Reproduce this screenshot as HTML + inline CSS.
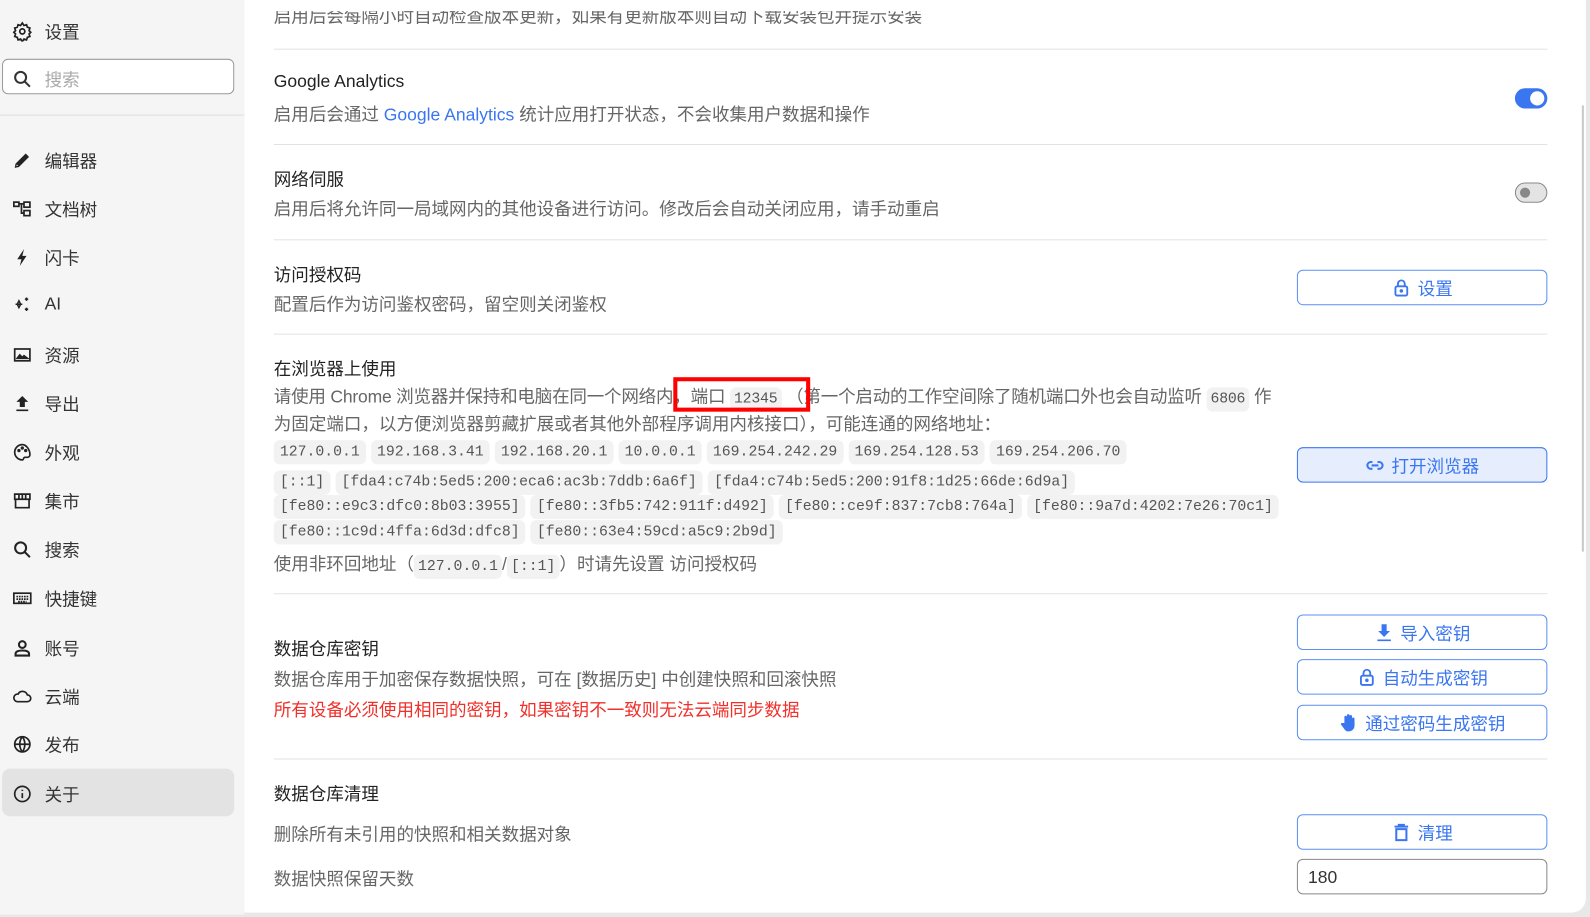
<!DOCTYPE html>
<html><head><meta charset="utf-8">
<style>
*{box-sizing:border-box;margin:0;padding:0}
body{width:1590px;height:917px;background:#e8e8e8;font-family:"Liberation Sans","Noto Sans CJK SC",sans-serif;position:relative;overflow:hidden}
#w{position:absolute;left:0;top:0;width:1568px;height:904px;transform:scale(1.014);transform-origin:0 0}
.side{position:absolute;left:0;top:0;width:241px;height:902px;background:#f5f5f5}
.main{position:absolute;left:241px;top:0;width:1323px;height:900px;background:#fff;border-radius:0 0 14px 0}
.a{position:absolute;white-space:nowrap}
.t{font-size:17.3px;color:#222}
.d{font-size:17.3px;color:#666}
.hr{position:absolute;left:270px;width:1256px;height:1px;background:#e2e2e2}
.nav{position:absolute;left:12px;font-size:17.3px;color:#333;display:flex;align-items:center}
.nav svg{width:20px;height:20px;margin-right:12px}
.c{font-family:"Liberation Mono",monospace;font-size:14.6px;color:#555;background:#f2f2f2;border-radius:6px;padding:2px 6px;display:inline-block;margin-right:5px;line-height:20px}
.i{padding:2px 4px;margin:0}
.btn{position:absolute;left:1279px;width:247px;height:35px;border:1px solid #5b8ff5;border-radius:6px;color:#3a76f0;font-size:17.3px;display:flex;align-items:center;justify-content:center;background:#fff}
.btn svg{width:20px;height:20px;margin-right:6px}
</style></head><body><div id="w">
<div class="side">
 <div class="nav" style="top:18px"><svg viewBox="0 0 24 24" fill="none" stroke="#222" stroke-width="2"><circle cx="12" cy="12" r="3"/><path d="M12 2l2 3 3-1 1 3 3 1-1 3 2 2-2 2 1 3-3 1-1 3-3-1-2 3-2-3-3 1-1-3-3-1 1-3-2-2 2-2-1-3 3-1 1-3 3 1z"/></svg>设置</div>
 <div class="a" style="left:2px;top:58px;width:229px;height:35px;border:1px solid #999;border-radius:6px;background:#fff"></div>
 <div class="nav" style="top:65px;color:#aaa"><svg viewBox="0 0 24 24" fill="none" stroke="#333" stroke-width="2.4"><circle cx="10" cy="10" r="6.5"/><path d="M15 15l6 6"/></svg>搜索</div>
 <div class="a" style="left:0;top:113px;width:241px;height:1px;background:#ddd"></div>
 <div class="nav" style="top:145px"><svg viewBox="0 0 24 24" fill="#222"><path d="M3 21l1-5L16 4l4 4L8 20zM5 19l2-.5L5.5 17z"/></svg>编辑器</div>
 <div class="nav" style="top:193px"><svg viewBox="0 0 24 24" fill="none" stroke="#222" stroke-width="2"><rect x="2" y="4" width="6" height="5"/><rect x="14" y="4" width="7" height="6"/><rect x="14" y="14" width="7" height="6"/><path d="M8 6h6M11 6v11h3"/></svg>文档树</div>
 <div class="nav" style="top:241px"><svg viewBox="0 0 24 24" fill="#222"><path d="M14 2L6 14h5l-2 8 8-12h-5z"/></svg>闪卡</div>
 <div class="nav" style="top:289px"><svg viewBox="0 0 24 24" fill="none" stroke="#222" stroke-width="1.8"><path d="M8 8l2 4-2 4-2-4zM4 12h8M17 4v4M15 6h4M17 16v4M15 18h4"/></svg>AI</div>
 <div class="nav" style="top:337px"><svg viewBox="0 0 24 24" fill="none" stroke="#222" stroke-width="2"><rect x="3" y="5" width="18" height="14"/><path d="M6 16l3-4 3 3 2-2 4 3z" fill="#222"/></svg>资源</div>
 <div class="nav" style="top:385px"><svg viewBox="0 0 24 24" fill="#222"><path d="M12 3l7 7h-4v6H9v-6H5zM5 19h14v2H5z"/></svg>导出</div>
 <div class="nav" style="top:433px"><svg viewBox="0 0 24 24" fill="none" stroke="#222" stroke-width="2"><path d="M12 3a9 9 0 100 18c2 0 1-3 3-3h3a3 3 0 003-3c0-6-4-12-9-12z"/><circle cx="8" cy="10" r="1"/><circle cx="12" cy="7" r="1"/><circle cx="16" cy="10" r="1"/></svg>外观</div>
 <div class="nav" style="top:481px"><svg viewBox="0 0 24 24" fill="none" stroke="#222" stroke-width="2"><path d="M3 4h18v6H3zM4 10v10h16V10M8 4v6M12 4v6M16 4v6"/></svg>集市</div>
 <div class="nav" style="top:529px"><svg viewBox="0 0 24 24" fill="none" stroke="#222" stroke-width="2.4"><circle cx="10" cy="10" r="6.5"/><path d="M15 15l6 6"/></svg>搜索</div>
 <div class="nav" style="top:577px"><svg viewBox="0 0 24 24" fill="none" stroke="#222" stroke-width="2"><rect x="2" y="6" width="20" height="12"/><path d="M5 10h14M5 13h14M7 16h10" stroke-dasharray="2 1"/></svg>快捷键</div>
 <div class="nav" style="top:626px"><svg viewBox="0 0 24 24" fill="none" stroke="#222" stroke-width="2.4"><circle cx="12" cy="8" r="4"/><path d="M4 21v-2c0-3 4-4 8-4s8 1 8 4v2z"/></svg>账号</div>
 <div class="nav" style="top:674px"><svg viewBox="0 0 24 24" fill="none" stroke="#222" stroke-width="2"><path d="M6 18h12a4 4 0 000-8 6 6 0 00-11-1 4.5 4.5 0 00-1 9z"/></svg>云端</div>
 <div class="nav" style="top:721px"><svg viewBox="0 0 24 24" fill="none" stroke="#222" stroke-width="2"><circle cx="12" cy="12" r="9"/><path d="M3 12h18M12 3c-4 5-4 13 0 18M12 3c4 5 4 13 0 18"/></svg>发布</div>
 <div class="a" style="left:2px;top:758px;width:229px;height:47px;background:#e3e3e3;border-radius:8px"></div>
 <div class="nav" style="top:770px"><svg viewBox="0 0 24 24" fill="none" stroke="#222" stroke-width="2"><circle cx="12" cy="12" r="9"/><path d="M12 11v6M12 7v1.5"/></svg>关于</div>
</div>
<div class="main"></div>
<div class="a" style="left:1560px;top:104px;width:2px;height:440px;background:#c8c8c8"></div>

<div class="a d" style="left:270px;top:2px;clip-path:inset(9px 0 0 0)">启用后会每隔小时自动检查版本更新，如果有更新版本则自动下载安装包并提示安装</div>
<div class="hr" style="top:48px"></div>
<div class="a t" style="left:270px;top:70px">Google Analytics</div>
<div class="a d" style="left:270px;top:99px">启用后会通过 <span style="color:#3a76f0">Google Analytics</span> 统计应用打开状态，不会收集用户数据和操作</div>
<div class="a" style="left:1494px;top:87px;width:32px;height:20px;border-radius:10px;background:#3a76f0"><div style="position:absolute;right:3px;top:3px;width:14px;height:14px;border-radius:50%;background:#fff"></div></div>
<div class="hr" style="top:142px"></div>
<div class="a t" style="left:270px;top:163px">网络伺服</div>
<div class="a d" style="left:270px;top:192px">启用后将允许同一局域网内的其他设备进行访问。修改后会自动关闭应用，请手动重启</div>
<div class="a" style="left:1494px;top:180px;width:32px;height:20px;border-radius:10px;background:#e4e4e4;border:1px solid #888"><div style="position:absolute;left:4px;top:4px;width:10px;height:10px;border-radius:50%;background:#888"></div></div>
<div class="hr" style="top:236px"></div>
<div class="a t" style="left:270px;top:257px">访问授权码</div>
<div class="a d" style="left:270px;top:286px">配置后作为访问鉴权密码，留空则关闭鉴权</div>
<div class="btn" style="top:266px"><svg viewBox="0 0 24 24" fill="none" stroke="#3a76f0" stroke-width="2.2"><rect x="5" y="10" width="14" height="11" rx="2"/><path d="M8 10V7a4 4 0 018 0v3"/><circle cx="12" cy="15.5" r="1" fill="#3a76f0"/></svg>设置</div>
<div class="hr" style="top:329px"></div>
<div class="a t" style="left:270px;top:350px">在浏览器上使用</div>
<div class="a d" style="left:270px;top:380px;line-height:23px;letter-spacing:-0.2px">请使用 Chrome 浏览器并保持和电脑在同一个网络内，端口 <span class="c i">12345</span> （第一个启动的工作空间除了随机端口外也会自动监听 <span class="c i">6806</span> 作</div>
<div class="a d" style="left:270px;top:404px">为固定端口，以方便浏览器剪藏扩展或者其他外部程序调用内核接口），可能连通的网络地址：</div>
<div class="a" style="left:664px;top:372px;width:135px;height:34px;border:4px solid #f00"></div>
<div class="a" style="left:270px;top:434px"><span class="c">127.0.0.1</span><span class="c">192.168.3.41</span><span class="c">192.168.20.1</span><span class="c">10.0.0.1</span><span class="c">169.254.242.29</span><span class="c">169.254.128.53</span><span class="c">169.254.206.70</span></div>
<div class="a" style="left:270px;top:464px"><span class="c">[::1]</span><span class="c">[fda4:c74b:5ed5:200:eca6:ac3b:7ddb:6a6f]</span><span class="c">[fda4:c74b:5ed5:200:91f8:1d25:66de:6d9a]</span></div>
<div class="a" style="left:270px;top:488px"><span class="c">[fe80::e9c3:dfc0:8b03:3955]</span><span class="c">[fe80::3fb5:742:911f:d492]</span><span class="c">[fe80::ce9f:837:7cb8:764a]</span><span class="c">[fe80::9a7d:4202:7e26:70c1]</span></div>
<div class="a" style="left:270px;top:513px"><span class="c">[fe80::1c9d:4ffa:6d3d:dfc8]</span><span class="c">[fe80::63e4:59cd:a5c9:2b9d]</span></div>
<div class="a d" style="left:270px;top:542px">使用非环回地址（<span class="c i">127.0.0.1</span>/<span class="c i">[::1]</span>）时请先设置 访问授权码</div>
<div class="btn" style="top:441px;background:#e6eefd;border-color:#3a76f0"><svg viewBox="0 0 24 24" fill="none" stroke="#3a76f0" stroke-width="2.4"><path d="M9 8H7a4 4 0 000 8h2M15 8h2a4 4 0 010 8h-2M8 12h8"/></svg>打开浏览器</div>
<div class="hr" style="top:585px"></div>
<div class="a t" style="left:270px;top:626px">数据仓库密钥</div>
<div class="a d" style="left:270px;top:656px">数据仓库用于加密保存数据快照，可在 [数据历史] 中创建快照和回滚快照</div>
<div class="a d" style="left:270px;top:686px;color:#f0302a">所有设备必须使用相同的密钥，如果密钥不一致则无法云端同步数据</div>
<div class="btn" style="top:606px"><svg viewBox="0 0 24 24" fill="#3a76f0"><path d="M9 2h6v8h4l-7 7-7-7h4zM4 20h16v2H4z"/></svg>导入密钥</div>
<div class="btn" style="top:650px"><svg viewBox="0 0 24 24" fill="none" stroke="#3a76f0" stroke-width="2.2"><rect x="5" y="10" width="14" height="11" rx="2"/><path d="M8 10V7a4 4 0 018 0v3"/><circle cx="12" cy="15.5" r="1" fill="#3a76f0"/></svg>自动生成密钥</div>
<div class="btn" style="top:695px"><svg viewBox="0 0 24 24" fill="#3a76f0"><path d="M7 12V5a1.5 1.5 0 013 0v6V3a1.5 1.5 0 013 0v8V4a1.5 1.5 0 013 0v8V7a1.5 1.5 0 013 0v8c0 4-3 7-7 7-3 0-4-1-6-4l-3-4a1.5 1.5 0 012-2z"/></svg>通过密码生成密钥</div>
<div class="hr" style="top:748px"></div>
<div class="a t" style="left:270px;top:769px">数据仓库清理</div>
<div class="a d" style="left:270px;top:809px">删除所有未引用的快照和相关数据对象</div>
<div class="btn" style="top:803px"><svg viewBox="0 0 24 24" fill="none" stroke="#3a76f0" stroke-width="2.4"><path d="M4 5h16M9 5V3h6v2M6 8h12v13H6z"/></svg>清理</div>
<div class="a d" style="left:270px;top:853px">数据快照保留天数</div>
<div class="a" style="left:1279px;top:847px;width:247px;height:35px;border:1px solid #888;border-radius:6px;font-size:17.3px;color:#333;padding:7px 10px">180</div>
</div></body></html>
